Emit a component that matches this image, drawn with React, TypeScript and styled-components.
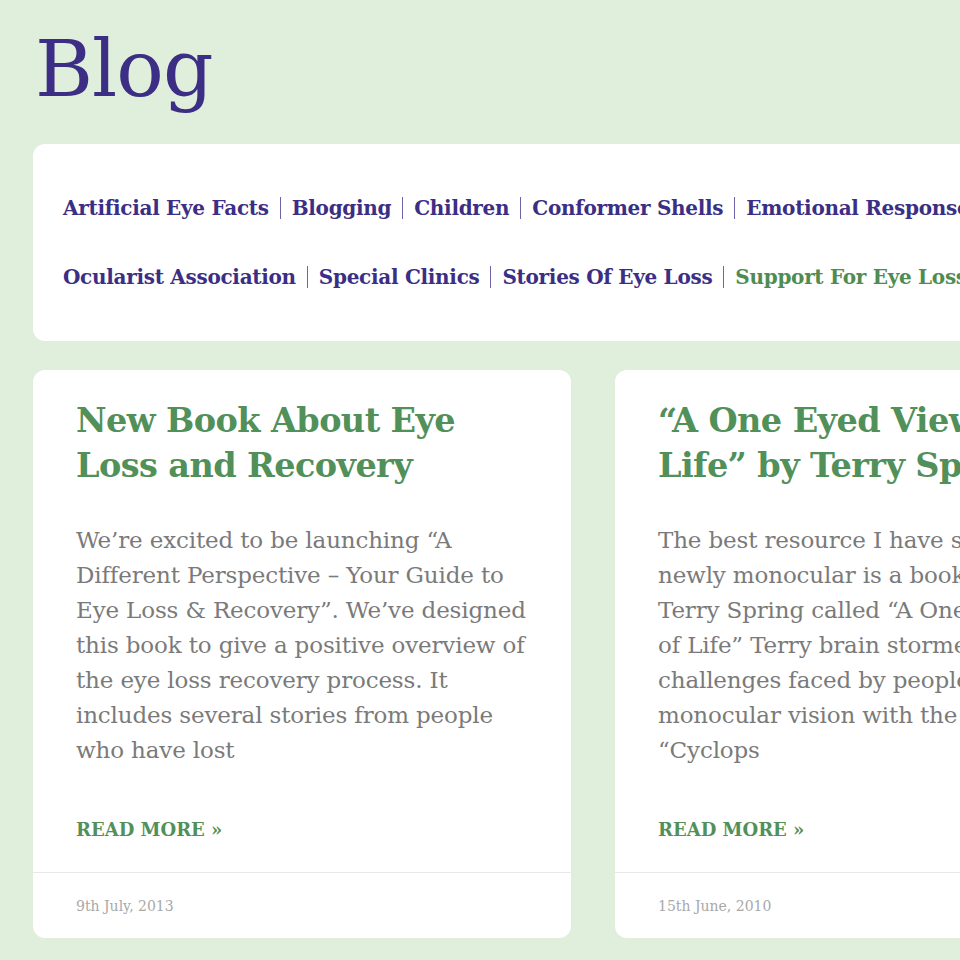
import React from 'react';
import styled, { createGlobalStyle } from 'styled-components';

const GlobalStyle = createGlobalStyle`
  html, body {
    margin: 0;
    padding: 0;
    background: #e0eedc;
    overflow: hidden;
  }
  body {
    font-family: "DejaVu Serif", "Liberation Serif", serif;
  }
`;

const Page = styled.div`
  width: 1190px;
  padding: 14px 0 40px 33px;
  box-sizing: border-box;
`;

const Heading = styled.h1`
  margin: 0 0 20px 2px;
  font-size: 79px;
  line-height: 110px;
  font-weight: normal;
  color: #3b2e84;
  letter-spacing: -1px;
`;

const TagBox = styled.div`
  background: #fff;
  border-radius: 12px;
  padding: 40px 30px;
  display: flex;
  flex-direction: column;
  gap: 21px;
`;

const TagRow = styled.div`
  display: flex;
  align-items: center;
  white-space: nowrap;
  height: 48px;
`;

const Tag = styled.a<{ $active?: boolean }>`
  font-size: 20px;
  font-weight: bold;
  color: ${(p) => (p.$active ? '#4f8c51' : '#3b2e84')};
  text-decoration: none;
  letter-spacing: -0.3px;
`;

const Sep = styled.span`
  width: 1px;
  height: 22px;
  background: #6e64a8;
  margin: 0 11px;
`;

const Cards = styled.div`
  display: grid;
  grid-template-columns: 538px 538px;
  gap: 44px;
  margin-top: 29px;
`;

const Card = styled.article`
  background: #fff;
  border-radius: 12px;
  display: flex;
  flex-direction: column;
  overflow: hidden;
`;

const CardBody = styled.div`
  padding: 28px 43px 27px;
  display: flex;
  flex-direction: column;
  flex: 1;
`;

const Title = styled.h2`
  margin: 0;
  font-size: 33.5px;
  line-height: 45px;
  font-weight: bold;
  color: #52905a;
  letter-spacing: -0.6px;
`;

const Excerpt = styled.p`
  margin: 35px 0 0;
  font-size: 23px;
  line-height: 35px;
  color: #7a7a7a;
  letter-spacing: -0.15px;
`;

const ReadMore = styled.a`
  margin-top: auto;
  padding-top: 47px;
  font-size: 18px;
  line-height: 30px;
  font-weight: bold;
  color: #52905a;
  text-decoration: none;
`;

const CardFooter = styled.div`
  border-top: 1px solid #e8e8e8;
  height: 65px;
  padding: 0 43px;
  display: flex;
  align-items: center;
  font-size: 14px;
  color: #a8a8a8;
`;

const tagRows: { name: string; active?: boolean }[][] = [
  [
    { name: 'Artificial Eye Facts' },
    { name: 'Blogging' },
    { name: 'Children' },
    { name: 'Conformer Shells' },
    { name: 'Emotional Responses' },
    { name: 'Eye Removal' },
  ],
  [
    { name: 'Ocularist Association' },
    { name: 'Special Clinics' },
    { name: 'Stories Of Eye Loss' },
    { name: 'Support For Eye Loss', active: true },
    { name: 'Uncategorized' },
  ],
];

const posts = [
  {
    title: 'New Book About Eye Loss and Recovery',
    excerpt:
      'We’re excited to be launching “A Different Perspective – Your Guide to Eye Loss & Recovery”. We’ve designed this book to give a positive overview of the eye loss recovery process. It includes several stories from people who have lost',
    date: '9th July, 2013',
  },
  {
    title: '“A One Eyed View of Life” by Terry Spring',
    excerpt:
      'The best resource I have seen for the newly monocular is a book written by Terry Spring called “A One Eyed View of Life” Terry brain stormed the challenges faced by people with monocular vision with the help of his “Cyclops',
    date: '15th June, 2010',
  },
];

export default function App() {
  return (
    <>
      <GlobalStyle />
      <Page>
        <Heading>Blog</Heading>
        <TagBox>
          {tagRows.map((row, i) => (
            <TagRow key={i}>
              {row.map((t, j) => (
                <React.Fragment key={t.name}>
                  {j > 0 && <Sep />}
                  <Tag href="#" $active={t.active}>
                    {t.name}
                  </Tag>
                </React.Fragment>
              ))}
            </TagRow>
          ))}
        </TagBox>
        <Cards>
          {posts.map((p) => (
            <Card key={p.title}>
              <CardBody>
                <Title>{p.title}</Title>
                <Excerpt>{p.excerpt}</Excerpt>
                <ReadMore href="#">READ MORE »</ReadMore>
              </CardBody>
              <CardFooter>{p.date}</CardFooter>
            </Card>
          ))}
        </Cards>
      </Page>
    </>
  );
}
